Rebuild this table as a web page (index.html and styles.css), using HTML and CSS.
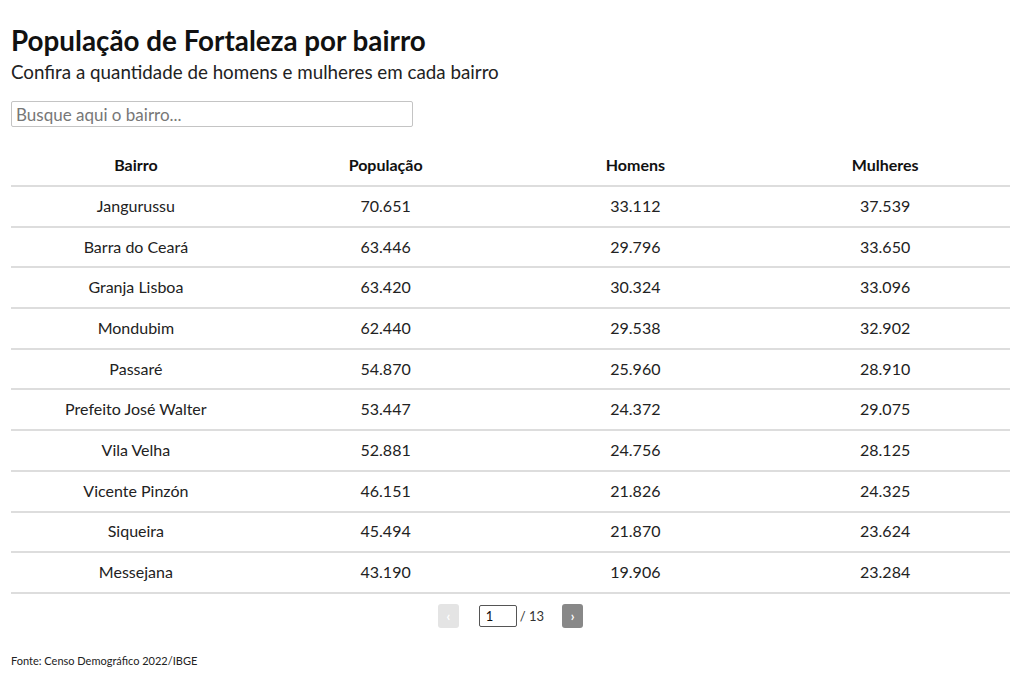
FILE: index.html
```html
<!DOCTYPE html>
<html lang="pt-BR">
<head>
<meta charset="utf-8">
<title>População de Fortaleza por bairro</title>
<link rel="stylesheet" href="styles.css">
</head>
<body>
<div class="page">
  <h1 class="title">População de Fortaleza por bairro</h1>
  <p class="subtitle">Confira a quantidade de homens e mulheres em cada bairro</p>
  <input class="search" type="text" placeholder="Busque aqui o bairro...">
  <table class="data">
    <thead>
      <tr><th>Bairro</th><th>População</th><th>Homens</th><th>Mulheres</th></tr>
    </thead>
    <tbody>
      <tr><td>Jangurussu</td><td>70.651</td><td>33.112</td><td>37.539</td></tr>
      <tr><td>Barra do Ceará</td><td>63.446</td><td>29.796</td><td>33.650</td></tr>
      <tr><td>Granja Lisboa</td><td>63.420</td><td>30.324</td><td>33.096</td></tr>
      <tr><td>Mondubim</td><td>62.440</td><td>29.538</td><td>32.902</td></tr>
      <tr><td>Passaré</td><td>54.870</td><td>25.960</td><td>28.910</td></tr>
      <tr><td>Prefeito José Walter</td><td>53.447</td><td>24.372</td><td>29.075</td></tr>
      <tr><td>Vila Velha</td><td>52.881</td><td>24.756</td><td>28.125</td></tr>
      <tr><td>Vicente Pinzón</td><td>46.151</td><td>21.826</td><td>24.325</td></tr>
      <tr><td>Siqueira</td><td>45.494</td><td>21.870</td><td>23.624</td></tr>
      <tr><td>Messejana</td><td>43.190</td><td>19.906</td><td>23.284</td></tr>
    </tbody>
  </table>
  <div class="pager">
    <button class="pg-btn pg-prev" type="button">‹</button>
    <input class="pg-input" type="text" value="1">
    <span class="pg-total">/ 13</span>
    <button class="pg-btn pg-next" type="button">›</button>
  </div>
  <p class="source">Fonte: Censo Demográfico 2022/IBGE</p>
</div>
</body>
</html>
```

FILE: styles.css
```css
* { box-sizing: border-box; }
html, body { margin: 0; padding: 0; background: #fff; }
body {
  font-family: "Lato", "Liberation Sans", sans-serif;
  color: #181818;
}
.page {
  padding: 23px 10px 0 11px;
}
.title {
  margin: 0;
  font-size: 27.8px;
  line-height: 36px;
  font-weight: 700;
  color: #111;
}
.subtitle {
  margin: 0;
  font-size: 18.8px;
  line-height: 26px;
  color: #222;
}
.search {
  display: block;
  margin-top: 16px;
  width: 402px;
  height: 26px;
  border: 1px solid #c4c4c4;
  border-radius: 2px;
  padding: 0 4px;
  font-family: inherit;
  font-size: 17px;
  color: #222;
}
.search::placeholder { color: #777; }
.data {
  margin-top: 18px;
  width: 999px;
  border-collapse: collapse;
  table-layout: fixed;
  font-size: 16px;
}
.data th {
  font-weight: 700;
  height: 41px;
  text-align: center;
  color: #111;
  border-bottom: 2px solid #ddd;
  padding: 0 0 2px;
}
.data td {
  height: 40.7px;
  text-align: center;
  color: #222;
  border-bottom: 2px solid #ddd;
  padding: 0 0 2px;
}
.pager {
  display: flex;
  justify-content: center;
  align-items: center;
  margin-top: 10px;
  height: 24px;
  font-size: 13px;
  color: #333;
}
.pg-btn {
  width: 21px;
  height: 24px;
  border: none;
  border-radius: 3px;
  color: #fff;
  font-size: 13px;
  font-weight: 700;
  padding: 0;
  font-family: inherit;
}
.pg-prev { background: #e4e4e4; margin-right: 20px; }
.pg-next { background: #888; margin-left: 18px; }
.pg-input {
  width: 38px;
  height: 22px;
  border: 1px solid #555;
  border-radius: 2px;
  padding: 0 6px;
  font-family: inherit;
  font-size: 13px;
  color: #111;
}
.pg-total { margin-left: 3px; }
.source {
  margin: 26px 0 0;
  font-size: 11px;
  color: #222;
}
```
